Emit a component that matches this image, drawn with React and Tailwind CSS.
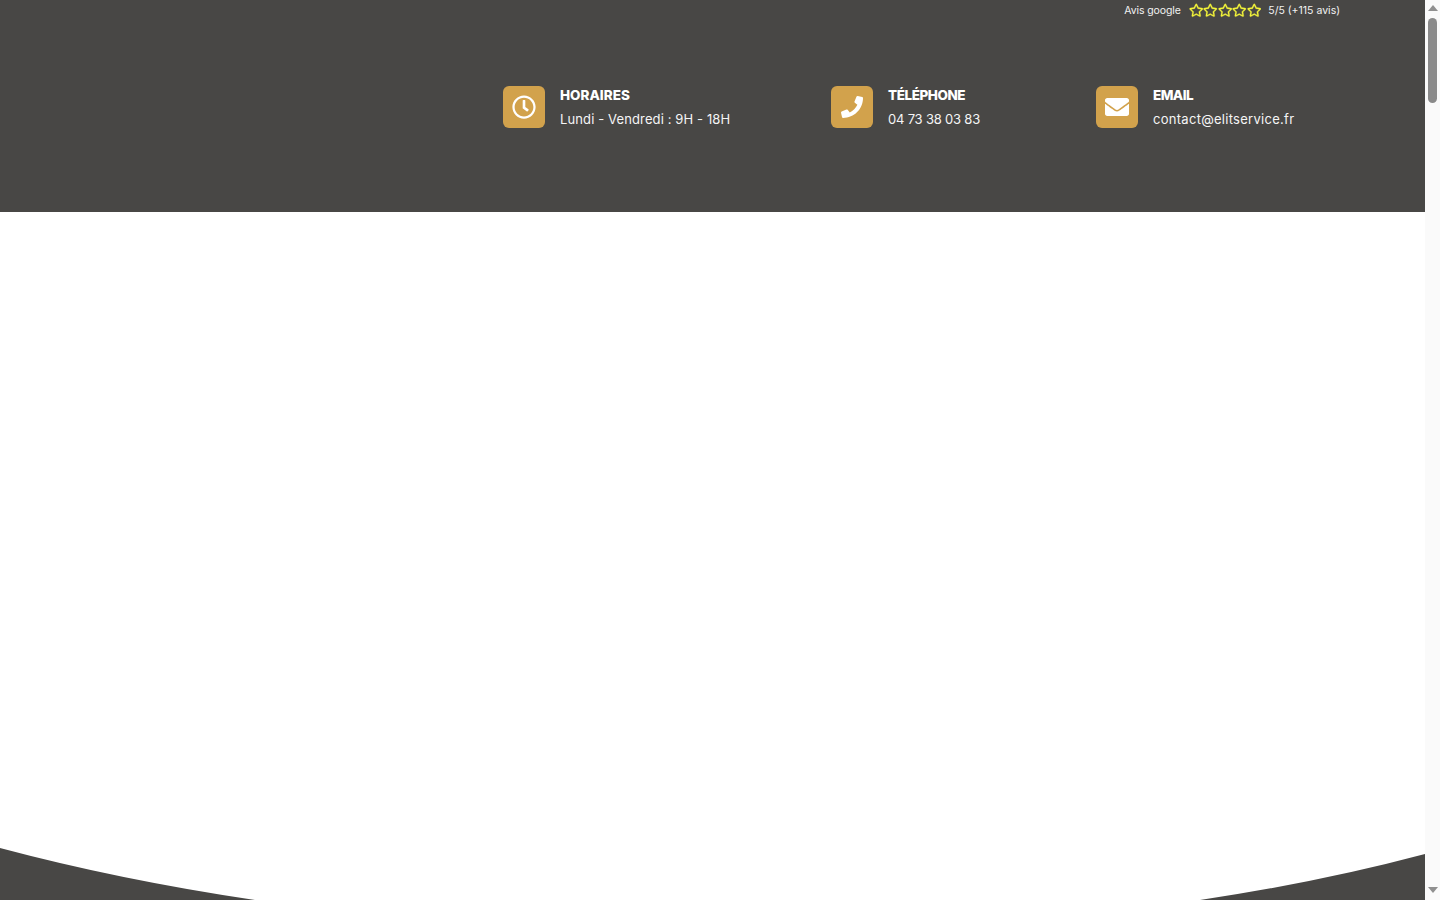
import React from "react";
import { FaRegClock, FaPhone, FaEnvelope, FaRegStar } from "react-icons/fa";

const items = [
  { Icon: FaRegClock, title: "HORAIRES", text: "Lundi - Vendredi : 9H - 18H", w: "w-[328px]", size: "text-[24px]", tt: "tracking-[0px]", ts: "tracking-[0.12px]" },
  { Icon: FaPhone, title: "TÉLÉPHONE", text: "04 73 38 03 83", w: "w-[265px]", size: "text-[22px]", tt: "tracking-[-0.45px]", ts: "tracking-[-0.2px]" },
  { Icon: FaEnvelope, title: "EMAIL", text: "contact@elitservice.fr", w: "w-[300px]", size: "text-[24px]", tt: "tracking-[-0.55px]", ts: "tracking-[0.28px]" },
];

export default function App() {
  return (
    <div className="flex h-screen overflow-hidden bg-white font-['Inter','Noto_Sans',sans-serif]">
      <div className="flex min-w-0 flex-1 flex-col">
        <header className="h-[212px] bg-[#484745] text-white">
          <div className="flex h-[21px] items-center justify-end pr-[85px] text-[10.5px] text-[#f2f2f2]">
            <span className="tracking-[-0.1px]">Avis google</span>
            <span className="ml-[8px] flex text-[14.5px] text-[#f4f53a]">
              {[0, 1, 2, 3, 4].map((i) => (
                <FaRegStar key={i} stroke="currentColor" strokeWidth="12" />
              ))}
            </span>
            <span className="ml-[7px]">5/5 (+115 avis)</span>
          </div>
          <div className="mt-[64px] flex pl-[503px]">
            {items.map(({ Icon, title, text, w, size, tt, ts }) => (
              <div key={title} className={`flex items-center gap-[15px] ${w}`}>
                <div className={`flex h-[42px] w-[42px] items-center justify-center rounded-md bg-[#d2a24c] ${size}`}>
                  <Icon />
                </div>
                <div>
                  <div className={`text-[13.5px] font-extrabold leading-[20px] ${tt}`}>{title}</div>
                  <div className={`mt-[4px] text-[13px] leading-5 text-[#f5f5f5] ${ts}`}>{text}</div>
                </div>
              </div>
            ))}
          </div>
        </header>
        <main className="flex flex-1 flex-col justify-end bg-white">
          <svg className="block w-full" height="52" viewBox="0 0 1425 52" preserveAspectRatio="none">
            <path d="M0 0 Q120 32 255 52 L0 52 Z M1425 6 Q1320 34 1200 52 L1425 52 Z" fill="#484745" />
          </svg>
        </main>
      </div>
      <aside className="flex h-full w-[15px] flex-none flex-col items-center bg-[#fafafa]">
        <div className="flex h-4 w-full items-center justify-center">
          <svg width="10" height="6" viewBox="0 0 10 6"><path d="M5 0 L10 6 L0 6 Z" fill="#8f8f8f" /></svg>
        </div>
        <div className="w-full flex-1 px-[3px] pt-[2px]">
          <div className="h-[85px] w-full rounded-full bg-[#8a8a8a]" />
        </div>
        <div className="flex h-5 w-full items-center justify-center">
          <svg width="10" height="6" viewBox="0 0 10 6"><path d="M0 0 L10 0 L5 6 Z" fill="#8f8f8f" /></svg>
        </div>
      </aside>
    </div>
  );
}
